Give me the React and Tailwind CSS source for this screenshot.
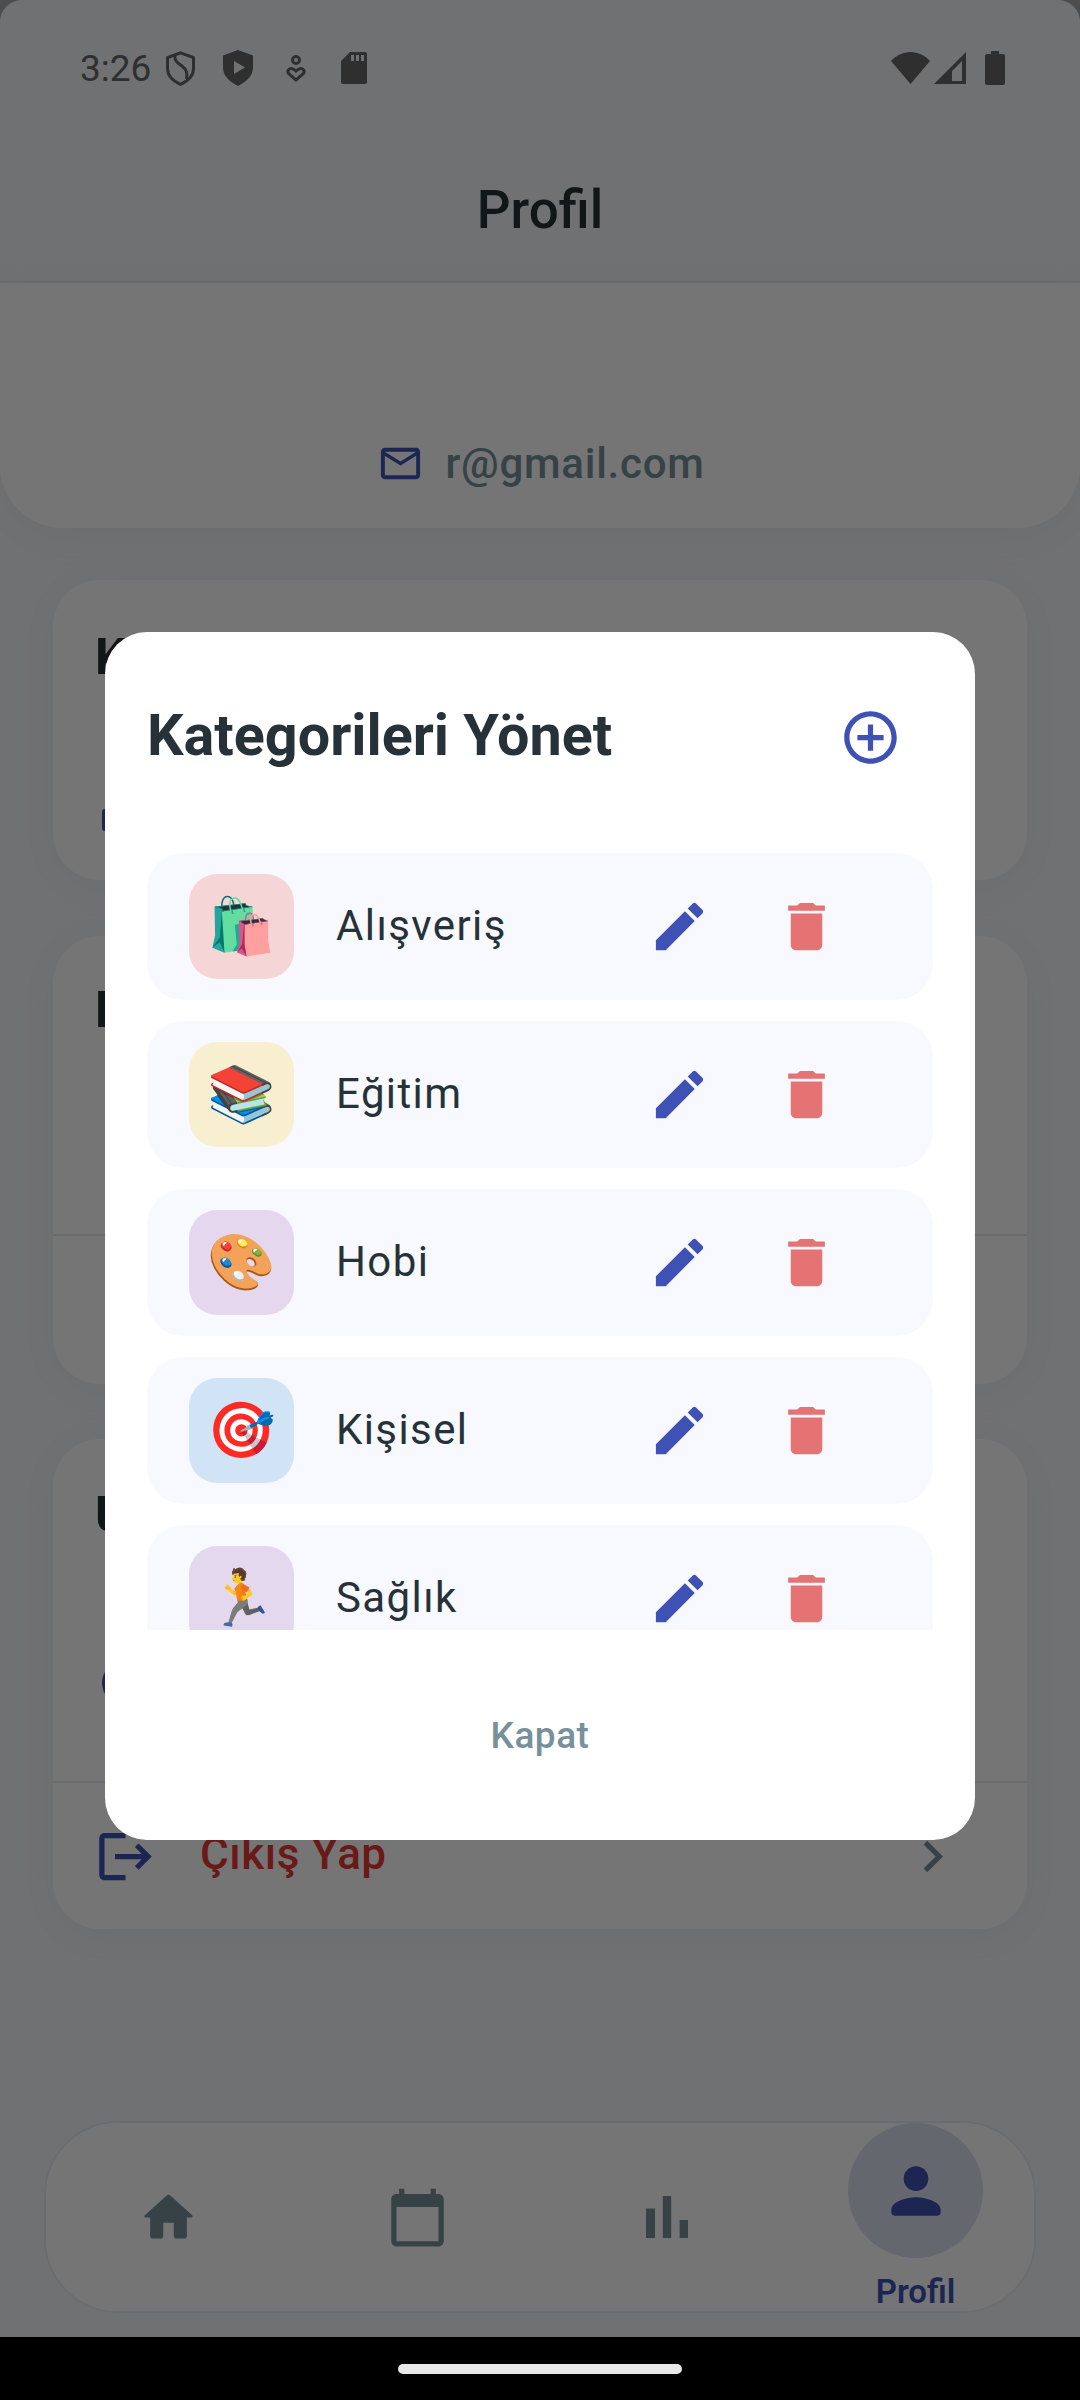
function Mi({ d, size = 63, className = "" }) {
  return (
    <svg viewBox="0 0 24 24" width={size} height={size} className={`shrink-0 fill-current ${className}`}>
      <path d={d} />
    </svg>
  );
}

const ICONS = {
  add: "M13 7h-2v4H7v2h4v4h2v-4h4v-2h-4V7zm-1-5C6.48 2 2 6.48 2 12s4.48 10 10 10 10-4.48 10-10S17.52 2 12 2zm0 18c-4.41 0-8-3.59-8-8s3.59-8 8-8 8 3.59 8 8-3.59 8-8 8z",
  edit: "M3 17.25V21h3.75L17.81 9.94l-3.75-3.75L3 17.25zM20.71 7.04c.39-.39.39-1.02 0-1.41l-2.34-2.34c-.39-.39-1.02-.39-1.41 0l-1.83 1.83 3.75 3.75 1.83-1.83z",
  del: "M6 19c0 1.1.9 2 2 2h8c1.1 0 2-.9 2-2V7H6v12zM19 4h-3.5l-1-1h-5l-1 1H5v2h14V4z",
  mail: "M20 4H4c-1.1 0-1.99.9-1.99 2L2 18c0 1.1.9 2 2 2h16c1.1 0 2-.9 2-2V6c0-1.1-.9-2-2-2zm0 14H4V8l8 5 8-5v10zm-8-7L4 6h16l-8 5z",
  logout: "M17 7l-1.41 1.41L18.17 11H8v2h10.17l-2.58 2.58L17 17l5-5zM4 5h8V3H4c-1.1 0-2 .9-2 2v14c0 1.1.9 2 2 2h8v-2H4V5z",
  chevron: "M10 6L8.59 7.41 13.17 12l-4.58 4.59L10 18l6-6z",
  home: "M10 19v-5h4v5c0 .55.45 1 1 1h3c.55 0 1-.45 1-1v-7h1.7c.46 0 .68-.57.33-.87L12.67 3.6c-.38-.34-.96-.34-1.34 0l-8.36 7.53c-.34.3-.13.87.33.87H5v7c0 .55.45 1 1 1h3c.55 0 1-.45 1-1z",
  calendar: "M20 3h-1V1h-2v2H7V1H5v2H4c-1.1 0-2 .9-2 2v16c0 1.1.9 2 2 2h16c1.1 0 2-.9 2-2V5c0-1.1-.9-2-2-2zm0 18H4V8h16v13z",
  bars: "M5 9.2h3V19H5zM10.6 5h2.8v14h-2.8zm5.6 8H19v6h-2.8z",
  person: "M12 12c2.21 0 4-1.79 4-4s-1.79-4-4-4-4 1.79-4 4 1.79 4 4 4zm0 2c-2.67 0-8 1.34-8 4v1c0 .55.45 1 1 1h14c.55 0 1-.45 1-1v-1c0-2.66-5.33-4-8-4z",
};

const CATEGORIES = [
  { name: "Alışveriş", emoji: "🛍️", tile: "bg-[#F5D5D6]" },
  { name: "Eğitim", emoji: "📚", tile: "bg-[#F7EFD0]" },
  { name: "Hobi", emoji: "🎨", tile: "bg-[#E4D7EE]" },
  { name: "Kişisel", emoji: "🎯", tile: "bg-[#D1E4F5]" },
  { name: "Sağlık", emoji: "🏃", tile: "bg-[#E4D8EE]" },
];

function StatusBar() {
  return (
    <div className="flex h-[100px] items-center pl-[80px] pr-[75px] pt-[36px] text-[#666666]">
      <span className="w-[86px] text-[37px] leading-none text-[#666666]">3:26</span>
      <svg viewBox="0 0 29 35" className="h-[35px] w-[29px]" fill="none" stroke="currentColor" strokeWidth="3">
        <path d="M14.5 1.8 27.5 6.5v11c0 7.5-5.5 12.5-13 15.8C7 30 1.5 25 1.5 17.5v-11z" />
        <path d="M9 4c-1 6 3 8 7 11s6 7 4.5 13" />
      </svg>
      <svg viewBox="0 0 30 36" className="ml-[28px] h-[36px] w-[30px]">
        <path fillRule="evenodd" fill="currentColor" d="M15 0 30 5.500v12c0 8-6 14-15 18.500C6 31.500 0 25.500 0 17.500v-12zM11 11v13l11-6.500z" />
      </svg>
      <svg viewBox="0 0 20 27" className="ml-[33px] h-[27px] w-[20px]" fill="none" stroke="currentColor" strokeWidth="3">
        <circle cx="10" cy="5" r="3.500" />
        <path d="M10 25 2.500 18.500c-1.500-2 0-5 2.500-5 2.500 0 5 2.500 5 2.500s2.500-2.500 5-2.500c2.500 0 4 3 2.500 5z" />
      </svg>
      <svg viewBox="0 0 26 32" className="ml-[35px] h-[32px] w-[26px]">
        <path fillRule="evenodd" fill="currentColor" d="M9 0h15a2 2 0 0 1 2 2v28a2 2 0 0 1-2 2H2a2 2 0 0 1-2-2V9zM10 3v6h3V3zM15 3v6h3V3zM20 3v6h3V3z" />
      </svg>
      <div className="flex-1" />
      <svg viewBox="0 0 39 32" className="h-[32px] w-[39px]">
        <path fill="currentColor" d="M19.500 32 0 9C5 3.500 12 0 19.500 0S34 3.500 39 9z" />
      </svg>
      <svg viewBox="0 0 32 32" className="ml-[4px] h-[32px] w-[32px]">
        <path fillRule="evenodd" fill="currentColor" d="M32 0v32H0zM28 9 18 19v10h10z" />
      </svg>
      <svg viewBox="0 0 20 34" className="ml-[19px] h-[34px] w-[20px]">
        <path fill="currentColor" d="M6 0h8v3h4a2 2 0 0 1 2 2v27a2 2 0 0 1-2 2H2a2 2 0 0 1-2-2V5a2 2 0 0 1 2-2h4z" />
      </svg>
    </div>
  );
}

function Card({ title, className, titleTop, children }) {
  return (
    <section className={`mx-[53px] overflow-hidden rounded-[47px] bg-white shadow-[0_6px_40px_rgba(70,90,130,0.08)] ${className}`}>
      <h2 className={`pl-[42px] text-[50px] font-bold leading-none text-[#263238] ${titleTop}`}>{title}</h2>
      {children}
    </section>
  );
}

function CategoryRow({ c }) {
  return (
    <div className="flex h-[147px] shrink-0 items-center rounded-[37px] bg-[#F8F9FE] pl-[42px]">
      <div className={`flex h-[105px] w-[105px] items-center justify-center rounded-[28px] ${c.tile}`}>
        <span className="text-[55px] leading-none" style={{ fontFamily: '"Noto Color Emoji", sans-serif' }}>{c.emoji}</span>
      </div>
      <span className="mb-[2px] ml-[42px] w-[312px] text-[42px] tracking-[1.4px] text-[#263238]">{c.name}</span>
      <Mi d={ICONS.edit} className="text-[#3F51B5]" />
      <Mi d={ICONS.del} className="ml-[64px] text-[#E57373]" />
    </div>
  );
}

function NavIcon({ d, size = 63 }) {
  return (
    <div className="flex w-[135px] items-center justify-center text-[#78909C]">
      <Mi d={d} size={size} />
    </div>
  );
}

export default function App() {
  return (
    <div className="flex h-[2400px] w-[1080px] flex-col overflow-hidden bg-black" style={{ fontFamily: 'Roboto, "Noto Sans", sans-serif' }}>
      <div className="relative h-[2337px] shrink-0 bg-[#A8A8A8]">
        <main className="flex h-full flex-col overflow-hidden rounded-t-[22px] bg-[#F5F7FA]">
          <header className="h-[283px] shrink-0 border-b-[2px] border-[#E4EEF6]">
            <StatusBar />
            <h1 className="pt-[84px] text-center text-[53px] font-medium leading-none text-[#263238]">Profil</h1>
          </header>
          <div className="flex h-[245px] shrink-0 items-end justify-center rounded-b-[63px] bg-white pb-[41px] shadow-[0_6px_40px_rgba(70,90,130,0.08)]">
            <Mi d={ICONS.mail} size={47} className="ml-[2px] text-[#3F51B5]" />
            <span className="mb-[2px] ml-[21px] text-[42px] font-medium leading-[42px] tracking-[0.75px] text-[#78909C]">r@gmail.com</span>
          </div>

          <Card title="Kategoriler" className="mt-[52px] h-[300px] shrink-0" titleTop="pt-[52px]">
            <div className="ml-[49px] mt-[127px] h-[22px] w-[30px] rounded-[3px] bg-[#3F51B5]" />
          </Card>

          <Card title="Hesap" className="mt-[56px] h-[448px] shrink-0" titleTop="pt-[49px]">
            <div className="mt-[199px] border-t-[2px] border-[#E4EEF6]" />
          </Card>

          <Card title="Uygulama" className="mt-[55px] h-[490px] shrink-0" titleTop="pt-[51px]">
            <div className="ml-[49px] mt-[121px] h-[44px] w-[44px] rounded-full bg-[#3F51B5]" />
            <div className="mt-[76px] border-t-[2px] border-[#E4EEF6]" />
            <div className="flex h-[148px] items-center pb-[2px] pl-[41px] pr-[63px]">
              <Mi d={ICONS.logout} className="text-[#3F51B5]" />
              <span className="mb-[4px] ml-[43px] flex-1 text-[44px] font-medium tracking-[0.5px] text-[#E53935]">Çıkış Yap</span>
              <Mi d={ICONS.chevron} className="text-[#78909C]" />
            </div>
          </Card>

          <nav className="mx-[44px] mb-[24px] mt-auto flex h-[192px] shrink-0 justify-between rounded-[74px] border-[2px] border-[#E4EEF6] bg-white pl-[55px] pr-[51px]">
            <NavIcon d={ICONS.home} />
            <NavIcon d={ICONS.calendar} />
            <NavIcon d={ICONS.bars} size={72} />
            <div className="flex w-[135px] flex-col items-center">
              <div className="flex h-[135px] w-[135px] items-center justify-center rounded-full bg-[#3F51B5]/18 text-[#3F51B5]">
                <Mi d={ICONS.person} size={74} />
              </div>
              <span className="mt-[17px] text-[33px] font-semibold leading-none text-[#3F51B5]">Profil</span>
            </div>
          </nav>
        </main>

        <div className="absolute inset-0 flex justify-center bg-black/54 pt-[632px]">
          <div className="flex h-[1208px] w-[870px] flex-col rounded-[42px] bg-white px-[42px] pt-[42px]">
            <div className="flex h-[126px] shrink-0 items-center justify-between">
              <h2 className="mb-[2px] text-[57.5px] font-bold text-[#263238]">Kategorileri Yönet</h2>
              <Mi d={ICONS.add} className="mr-[31px] text-[#3F51B5]" />
            </div>
            <div className="mt-[53px] flex h-[777px] shrink-0 flex-col gap-[21px] overflow-hidden">
              {CATEGORIES.map((c) => (
                <CategoryRow key={c.name} c={c} />
              ))}
            </div>
            <div className="flex h-[206px] items-center justify-center pt-[6px] text-[37px] font-medium tracking-[0.5px] text-[#78909C]">Kapat</div>
          </div>
        </div>
      </div>
      <div className="flex flex-1 items-center justify-center bg-black">
        <div className="h-[10px] w-[284px] rounded-full bg-[#E8E8E8]" />
      </div>
    </div>
  );
}
